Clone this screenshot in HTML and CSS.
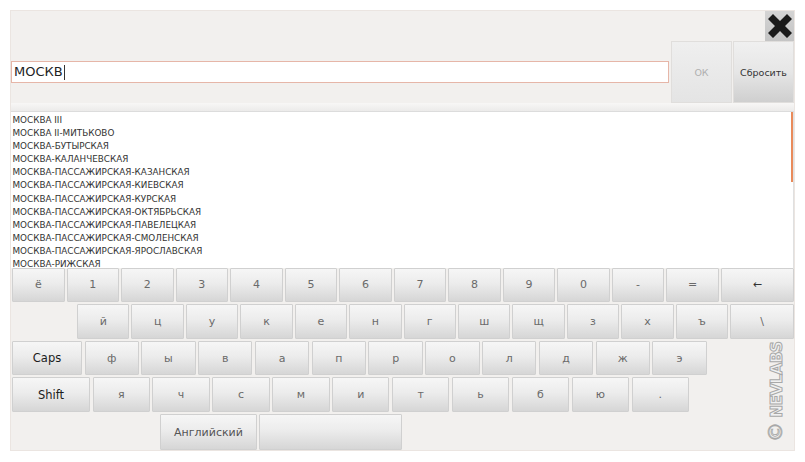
FILE: index.html
```html
<!DOCTYPE html>
<html>
<head>
<meta charset="utf-8">
<link rel="stylesheet" href="styles.css">
</head>
<body>
<div class="panel">
  <div class="top-row">
    <div class="close">
      <svg width="28" height="28" viewBox="0 0 28 28"><path d="M2 7 L7 2 L14 9 L21 2 L26 7 L19 14 L26 21 L21 26 L14 19 L7 26 L2 21 L9 14 Z" fill="#1a1a1a"/></svg>
    </div>
  </div>
  <div class="input-row">
    <div class="input-wrap"><div class="input">МОСКВ<span class="caret"></span></div></div>
    <div class="btn ok">ОК</div>
    <div class="btn reset">Сбросить</div>
  </div>
  <div class="strip"></div>
  <div class="list">
    <div class="item">МОСКВА III</div>
    <div class="item">МОСКВА II-МИТЬКОВО</div>
    <div class="item">МОСКВА-БУТЫРСКАЯ</div>
    <div class="item">МОСКВА-КАЛАНЧЕВСКАЯ</div>
    <div class="item">МОСКВА-ПАССАЖИРСКАЯ-КАЗАНСКАЯ</div>
    <div class="item">МОСКВА-ПАССАЖИРСКАЯ-КИЕВСКАЯ</div>
    <div class="item">МОСКВА-ПАССАЖИРСКАЯ-КУРСКАЯ</div>
    <div class="item">МОСКВА-ПАССАЖИРСКАЯ-ОКТЯБРЬСКАЯ</div>
    <div class="item">МОСКВА-ПАССАЖИРСКАЯ-ПАВЕЛЕЦКАЯ</div>
    <div class="item">МОСКВА-ПАССАЖИРСКАЯ-СМОЛЕНСКАЯ</div>
    <div class="item">МОСКВА-ПАССАЖИРСКАЯ-ЯРОСЛАВСКАЯ</div>
    <div class="item">МОСКВА-РИЖСКАЯ</div>
    <div class="scroll-thumb"></div>
  </div>
  <div class="keyboard">
    <div class="row r1">
      <div class="key">ё</div><div class="key">1</div><div class="key">2</div><div class="key">3</div><div class="key">4</div><div class="key">5</div><div class="key">6</div><div class="key">7</div><div class="key">8</div><div class="key">9</div><div class="key">0</div><div class="key">-</div><div class="key">=</div><div class="key back">←</div>
    </div>
    <div class="row r2">
      <div class="spacer"></div>
      <div class="key">й</div><div class="key">ц</div><div class="key">у</div><div class="key">к</div><div class="key">е</div><div class="key">н</div><div class="key">г</div><div class="key">ш</div><div class="key">щ</div><div class="key">з</div><div class="key">х</div><div class="key">ъ</div><div class="key bslash">\</div>
    </div>
    <div class="row r3">
      <div class="key mod caps">Caps</div>
      <div class="key">ф</div><div class="key">ы</div><div class="key">в</div><div class="key">а</div><div class="key">п</div><div class="key">р</div><div class="key">о</div><div class="key">л</div><div class="key">д</div><div class="key">ж</div><div class="key">э</div>
    </div>
    <div class="row r4">
      <div class="key mod shift">Shift</div>
      <div class="key">я</div><div class="key">ч</div><div class="key">с</div><div class="key">м</div><div class="key">и</div><div class="key">т</div><div class="key">ь</div><div class="key">б</div><div class="key">ю</div><div class="key">.</div>
    </div>
    <div class="row r5">
      <div class="key lang">Английский</div>
      <div class="key space"></div>
    </div>
  </div>
  <div class="logo"><span class="copy">©</span> NEVLABS</div>
</div>
</body>
</html>
```
FILE: styles.css
```css
* { box-sizing: border-box; }
html, body { margin: 0; padding: 0; background: #ffffff; }
body { font-family: "DejaVu Sans", sans-serif; }

.panel {
  position: relative;
  margin: 10px 0 0 10px;
  width: 785px;
  height: 441px;
  background: #f2f0ee;
  border: 1px solid #ebe5e1;
  display: flex;
  flex-direction: column;
}

.top-row {
  height: 30px;
  display: flex;
  justify-content: flex-end;
}
.close {
  width: 29px;
  height: 30px;
  background: linear-gradient(#d4d4d4, #c4c4c4);
  display: flex;
  align-items: center;
  justify-content: center;
}

.input-row {
  height: 62px;
  display: flex;
}
.input-wrap {
  flex: 1;
  display: flex;
  align-items: center;
  margin-right: 2px;
}
.input {
  width: 100%;
  height: 22px;
  background: #ffffff;
  border: 1px solid #e6b6a8;
  font-size: 13px;
  color: #222;
  line-height: 20px;
  padding-left: 2px;
  display: flex;
  align-items: center;
}
.caret {
  display: inline-block;
  width: 1px;
  height: 15px;
  background: #333;
  margin-left: 1px;
}
.btn {
  width: 61px;
  height: 62px;
  display: flex;
  align-items: center;
  justify-content: center;
  font-size: 9.5px;
  border: 1px solid #e0dedc;
}
.ok {
  background: linear-gradient(#efefef, #e4e4e4);
  color: #b0b0b0;
  margin-right: 1px;
}
.reset {
  background: linear-gradient(#f0f0f0 0%, #e6e6e6 50%, #cfcfcf 100%);
  color: #333;
}

.strip {
  height: 9px;
  background: linear-gradient(#f8f7f6, #ecebea);
  border-bottom: 1px solid #dcdcdc;
}

.list {
  position: relative;
  height: 156px;
  background: #ffffff;
  overflow: hidden;
  padding-top: 2px;
  border-right: 1px solid #e0e0e0;
}
.item {
  font-size: 8.8px;
  line-height: 13.1px;
  height: 13.1px;
  color: #333;
  padding-left: 1.5px;
  white-space: nowrap;
}
.scroll-thumb {
  position: absolute;
  right: 0;
  top: 0;
  width: 2px;
  height: 70px;
  background: #e98a5a;
}

.keyboard {
  padding-left: 1px;
  display: flex;
  flex-direction: column;
  gap: 2px;
}
.row {
  display: flex;
  height: 34.6px;
}
.key {
  background: linear-gradient(#f6f6f6 0%, #ececec 45%, #d6d6d6 100%);
  border: 1px solid #d0d0d0;
  border-radius: 1px;
  display: flex;
  align-items: center;
  justify-content: center;
  color: #6a6a6a;
  font-size: 11px;
}
.r1, .r2 { gap: 2px; }
.r1 .key { flex: 1; }
.r1 .back { flex: none; width: 73px; color: #333; }
.r2 .spacer { width: 63px; }
.r2 .key { flex: 1; }
.r2 .bslash { flex: none; width: 64px; }
.r3 { gap: 2.5px; }
.r3 .key { width: 54.3px; }
.r3 .caps { width: 70px; }
.r4 { gap: 2.5px; }
.r4 .key { width: 57.4px; }
.r4 .shift { width: 78px; }
.mod { color: #1c1c1c; font-size: 11.5px; }
.r5 { gap: 2px; padding-left: 148px; height: 36px; }
.r5 .lang { width: 97px; color: #555; font-size: 11px; }
.r5 .space { width: 143px; }

.logo {
  position: absolute;
  left: 754px;
  top: 431px;
  transform: rotate(-90deg);
  transform-origin: left top;
  font-family: "DejaVu Sans", sans-serif;
  font-weight: bold;
  font-size: 15.5px;
  letter-spacing: -0.6px;
  color: #f0f0f0;
  -webkit-text-stroke: 1px #a8a8a8;
  white-space: nowrap;
  line-height: 20px;
}
.copy {
  font-size: 20px;
  font-weight: normal;
  -webkit-text-stroke: 0.8px #a8a8a8;
}
```
